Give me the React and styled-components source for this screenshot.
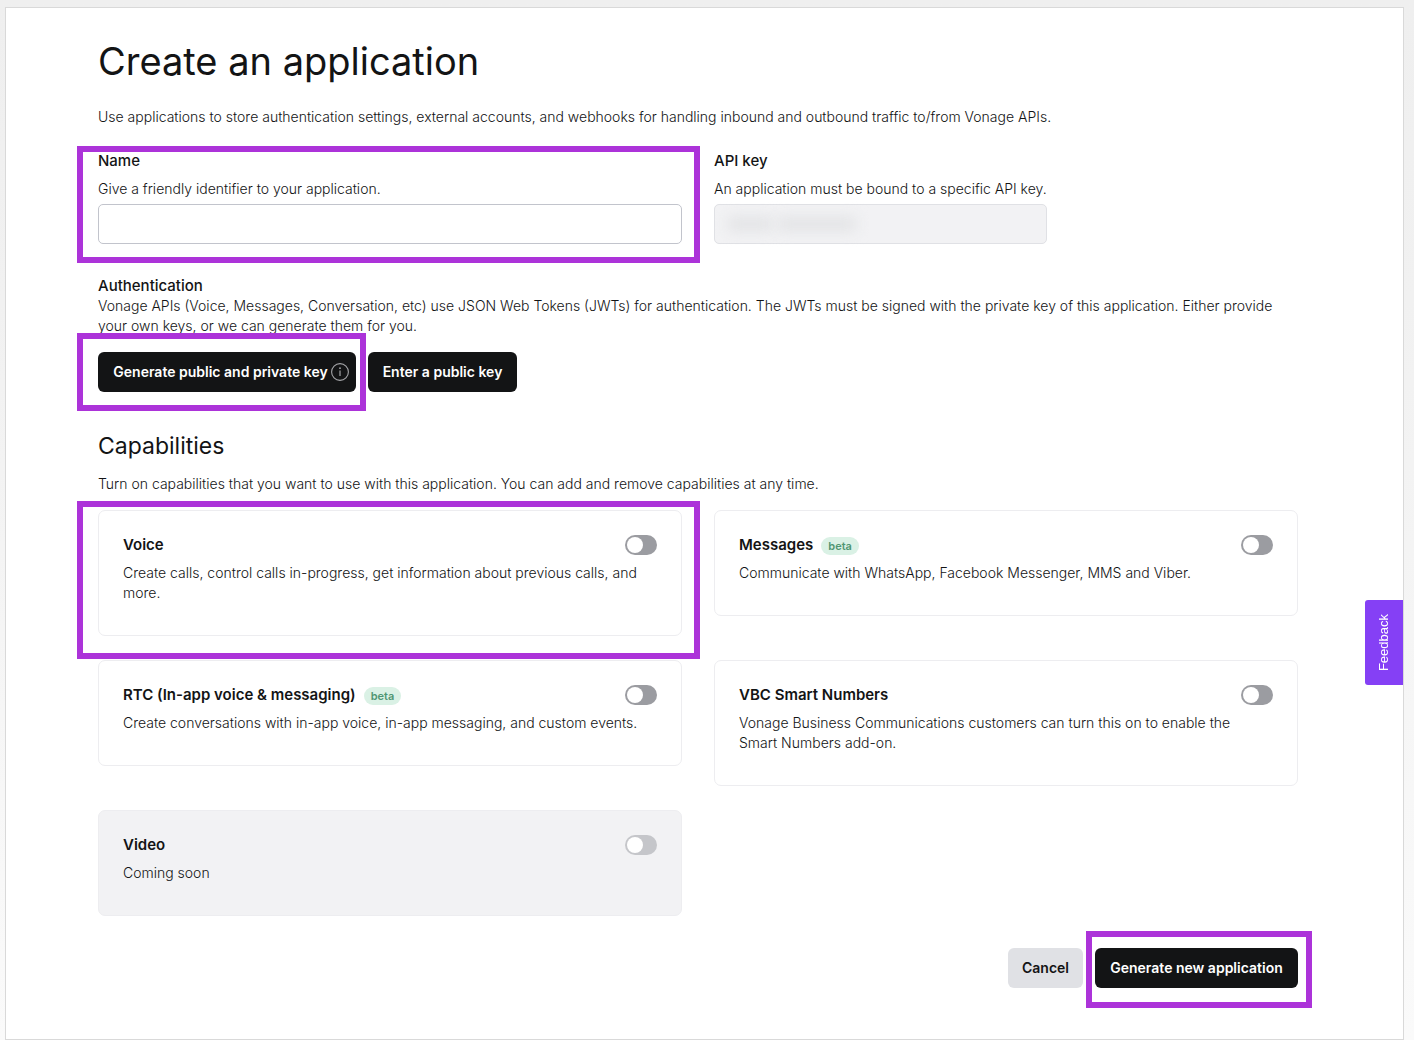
import React from "react";
import styled, { createGlobalStyle, css } from "styled-components";

const GlobalStyle = createGlobalStyle`
  *, *::before, *::after { box-sizing: border-box; }
  body {
    margin: 0;
    background: linear-gradient(180deg, #efefef 0, #f1f1f1 300px, #fafafa 100%);
    color: #131415;
    font: 300 14px/20px Inter, "Open Sans", sans-serif;
  }
  h1, h2, h3, p { margin: 0; }
  button, input { font: inherit; }
`;

const Panel = styled.main`
  position: relative;
  margin: 7px 10px 0 5px;
  padding: 27px 105px 51px 92px;
  border: 1px solid #d9d9d9;
  background: #fff;
`;

const Title = styled.h1`
  margin-bottom: 20px;
  color: #131415;
  font-size: 38px;
  font-weight: 400;
  line-height: 52px;
`;

const Columns = styled.div`
  display: grid;
  grid-template-columns: repeat(2, minmax(0, 1fr));
  align-items: start;
  gap: 24px 32px;
`;

const Fields = styled(Columns)`
  margin: 24px 0 32px;
`;

const Field = styled.div`
  position: relative;
  display: flex;
  flex-direction: column;
  max-width: ${(p) => p.$max || "none"};
`;

const Label = styled.label`
  margin-bottom: 8px;
  color: #131415;
  font-size: 15px;
  font-weight: 500;
`;

const Help = styled.p`
  margin-bottom: 5px;
  white-space: nowrap;
`;

const TextInput = styled.input`
  width: 100%;
  height: 40px;
  padding: 0 12px;
  border: 1px solid #c2c4cc;
  border-radius: 5px;
  background: #fff;
  outline: none;

  &:disabled {
    border-color: #e0e1e5;
    background: #f2f2f4;
  }
`;

const Masked = styled.div`
  position: relative;
  display: flex;

  &::before, &::after {
    content: "";
    position: absolute;
    top: 13px;
    height: 14px;
    background: #e2e3e5;
    filter: blur(7px);
  }
  &::before { left: 14px; width: 44px; }
  &::after { left: 64px; width: 78px; }
`;

const Section = styled.section`
  display: flex;
  flex-direction: column;
`;

const SectionLabel = styled.h2`
  color: #131415;
  font-size: 15px;
  font-weight: 500;
  line-height: 20px;
`;

const Heading = styled.h2`
  margin: 38px 0 12px;
  color: #131415;
  font-size: 23px;
  font-weight: 400;
  line-height: 32px;
`;

const Actions = styled.div`
  display: flex;
  gap: 12px;
  margin-top: ${(p) => p.$top};
  justify-content: ${(p) => (p.$end ? "flex-end" : "flex-start")};
`;

const ButtonSlot = styled.div`
  position: relative;
`;

const Button = styled.button`
  display: flex;
  align-items: center;
  justify-content: center;
  gap: 3px;
  height: 40px;
  min-width: ${(p) => p.$min || "0"};
  padding: 0 ${(p) => (p.$icon ? "6px" : "14px")} 0 14px;
  border: 0;
  border-radius: 6px;
  background: ${(p) => (p.$soft ? "#e0e1e5" : "#131415")};
  color: ${(p) => (p.$soft ? "#131415" : "#fff")};
  font-weight: 600;
  white-space: nowrap;
  cursor: pointer;
`;

const Highlight = styled.span`
  position: absolute;
  inset: ${(p) => p.$inset};
  z-index: 1;
  border: 6px solid #ac33d9;
  pointer-events: none;
`;

const Cards = styled(Columns)`
  margin-top: 16px;
`;

const CardBox = styled.article`
  position: relative;
  padding: 24px 24px 32px;
  border: 1px solid #ededf0;
  border-radius: 7px;
  ${(p) => p.$off && css`background: #f2f2f4;`}
`;

const CardHead = styled.div`
  display: flex;
  align-items: center;
  gap: 8px;
  height: 20px;
  margin-bottom: 8px;
`;

const CardTitle = styled.label`
  color: #131415;
  font-size: 15px;
  font-weight: 600;
`;

const CardText = styled.p`
  max-width: 520px;
`;

const Badge = styled.span`
  margin-top: 2px;
  padding: 0 7px;
  border-radius: 9px;
  background: #daf1e5;
  color: #4f9673;
  font-size: 11px;
  font-weight: 600;
  line-height: 18px;
`;

const Switch = styled.input`
  appearance: none;
  display: flex;
  align-items: center;
  width: 32px;
  height: 20px;
  margin: 0 0 0 auto;
  padding: 2px;
  border-radius: 10px;
  background: #9b9ca1;

  &::before {
    content: "";
    width: 16px;
    height: 16px;
    border-radius: 50%;
    background: #fff;
  }
  &:checked { justify-content: flex-end; background: #131415; }
  &:disabled { background: #c5c6ca; }
`;

const Feedback = styled.button`
  position: absolute;
  top: 592px;
  right: 0;
  display: flex;
  align-items: center;
  justify-content: center;
  width: 38px;
  height: 85px;
  padding: 0;
  border: 0;
  border-radius: 3px 0 0 3px;
  background: #8540f5;
  color: #fff;
  font-family: "Liberation Sans", Arial, sans-serif;
  font-size: 13px;

  span {
    writing-mode: vertical-rl;
    transform: rotate(180deg);
  }
`;

const InfoIcon = () => (
  <svg width="18" height="18" viewBox="0 0 18 18" fill="none" aria-hidden="true">
    <circle cx="9" cy="9" r="8.4" stroke="#a4a5a8" strokeWidth="1.1" />
    <path d="M9 7.6v5.4" stroke="#a4a5a8" strokeWidth="1.2" />
    <circle cx="9" cy="5.2" r="0.9" fill="#a4a5a8" />
  </svg>
);

const capabilities = [
  { id: "voice", title: "Voice", marked: true, text: "Create calls, control calls in-progress, get information about previous calls, and more." },
  { id: "messages", title: "Messages", beta: true, text: "Communicate with WhatsApp, Facebook Messenger, MMS and Viber." },
  { id: "rtc", title: "RTC (In-app voice & messaging)", beta: true, text: "Create conversations with in-app voice, in-app messaging, and custom events." },
  { id: "vbc", title: "VBC Smart Numbers", text: "Vonage Business Communications customers can turn this on to enable the Smart Numbers add-on." },
  { id: "video", title: "Video", off: true, text: "Coming soon" },
];

const Capability = ({ id, title, text, beta, off, marked }) => (
  <CardBox $off={off}>
    <CardHead>
      <CardTitle htmlFor={id}>{title}</CardTitle>
      {beta && <Badge>beta</Badge>}
      <Switch id={id} type="checkbox" role="switch" disabled={off} />
    </CardHead>
    <CardText>{text}</CardText>
    {marked && <Highlight $inset="-10px -19px -24px -22px" />}
  </CardBox>
);

export default function App() {
  return (
    <>
      <GlobalStyle />
      <Panel>
        <Title>Create an application</Title>
        <p>
          Use applications to store authentication settings, external accounts, and webhooks for
          handling inbound and outbound traffic to/from Vonage APIs.
        </p>
        <Fields>
          <Field>
            <Label htmlFor="name">Name</Label>
            <Help>Give a friendly identifier to your application.</Help>
            <TextInput id="name" type="text" />
            <Highlight $inset="-5px -18px -19px -21px" />
          </Field>
          <Field $max="333px">
            <Label htmlFor="key">API key</Label>
            <Help>An application must be bound to a specific API key.</Help>
            <Masked>
              <TextInput id="key" type="text" disabled />
            </Masked>
          </Field>
        </Fields>
        <Section>
          <SectionLabel>Authentication</SectionLabel>
          <p>
            Vonage APIs (Voice, Messages, Conversation, etc) use JSON Web Tokens (JWTs) for
            authentication. The JWTs must be signed with the private key of this application.
            Either provide your own keys, or we can generate them for you.
          </p>
          <Actions $top="16px">
            <ButtonSlot>
              <Button type="button" $icon $min="258px">
                Generate public and private key
                <InfoIcon />
              </Button>
              <Highlight $inset="-19px -10px -19px -21px" />
            </ButtonSlot>
            <Button type="button" $min="149px">Enter a public key</Button>
          </Actions>
        </Section>
        <Section>
          <Heading>Capabilities</Heading>
          <p>
            Turn on capabilities that you want to use with this application. You can add and remove
            capabilities at any time.
          </p>
          <Cards>
            {capabilities.map((c) => (
              <Capability key={c.id} {...c} />
            ))}
          </Cards>
        </Section>
        <Actions $top="32px" $end>
          <Button type="button" $soft>Cancel</Button>
          <ButtonSlot>
            <Button type="submit" $min="203px">Generate new application</Button>
            <Highlight $inset="-17px -14px -20px -9px" />
          </ButtonSlot>
        </Actions>
        <Feedback type="button"><span>Feedback</span></Feedback>
      </Panel>
    </>
  );
}
